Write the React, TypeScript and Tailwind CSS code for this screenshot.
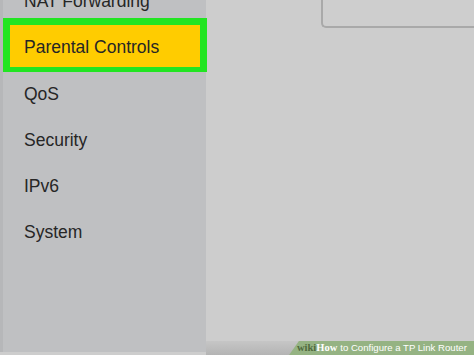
const items = ['QoS', 'Security', 'IPv6', 'System'];

export default function App() {
  return (
    <div
      className="relative flex w-[474px] h-[355px] overflow-hidden bg-[#cdcdcd] text-[#262626]"
      style={{ fontFamily: '"Liberation Sans", Arial, sans-serif' }}
    >
      {/* Sidebar */}
      <div className="relative z-10 flex flex-col w-[206px] h-[352px] shrink-0 bg-[#bfc0c2] border-l-[3px] border-[#b6b7b9]">
        <div className="flex items-center h-[46px] -mt-[22px] pl-[21px] text-[17.5px]">NAT Forwarding</div>

        {/* Selected item with highlight */}
        <div className="flex items-center w-[204px] h-[54px] -mt-[6px] pt-[2px] pl-[14px] bg-[#ffcc00] border-x-[7px] border-t-[7px] border-b-[5px] border-[#22e522] text-[17.5px]">
          Parental Controls
        </div>

        {items.map((label, i) => (
          <div
            key={label}
            className={`flex items-center h-[46px] pl-[21px] text-[17.5px] ${i === 0 ? '-mt-[1px]' : ''}`}
          >
            {label}
          </div>
        ))}
      </div>

      {/* Main area */}
      <div className="flex flex-col flex-1 h-full">
        <div className="ml-[115px] -mt-[10px] h-[38px] rounded-bl-[5px] border-l-2 border-b-2 border-[#a9a9a9] bg-[#cecece]" />
        <div className="flex-1" />
        <div className="h-[14px] bg-gradient-to-b from-[#c6c6c6] to-[#b4b4b4]" />
      </div>

      {/* wikiHow caption */}
      <div className="absolute right-0 bottom-0 h-[14px] w-[186px] overflow-hidden">
        <div className="absolute inset-y-0 left-[6px] -right-[10px] bg-[#95b383] -skew-x-[35deg]" />
        <div className="relative flex items-center h-full pl-[9px] leading-none whitespace-nowrap">
          <span className="text-[10.5px] font-bold text-[#4f6a3c]" style={{ fontFamily: '"Liberation Serif", serif' }}>wiki</span>
          <span className="text-[10.5px] font-bold text-white" style={{ fontFamily: '"Liberation Serif", serif' }}>How</span>
          <span className="text-[9.6px] text-white ml-[3px]">to Configure a TP Link Router</span>
        </div>
      </div>
    </div>
  );
}
